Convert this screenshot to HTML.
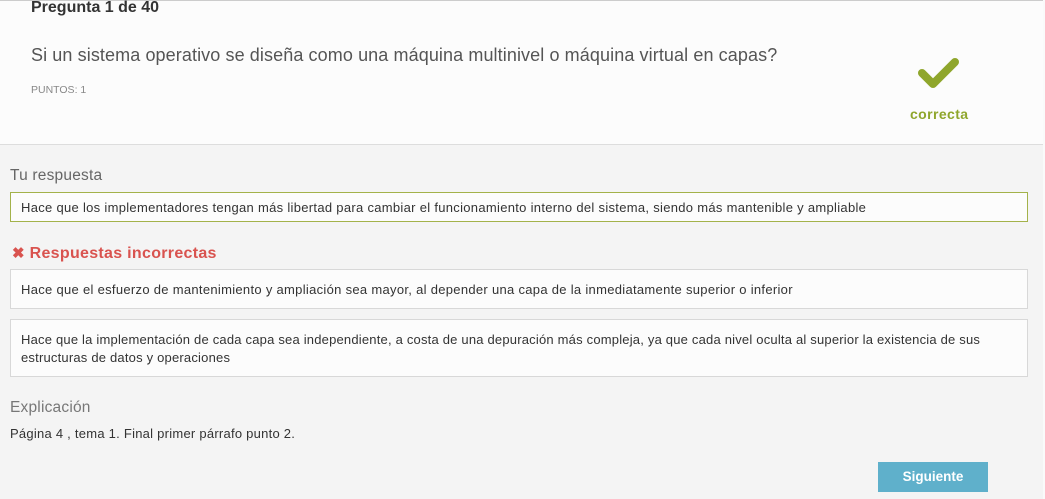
<!DOCTYPE html>
<html><head><meta charset="utf-8"><style>
*{margin:0;padding:0;box-sizing:border-box}
body{width:1045px;height:499px;overflow:hidden;background:#f4f4f4;font-family:"Liberation Sans",sans-serif;color:#333;position:relative}
.top{position:absolute;left:0;top:0;width:1043px;height:145px;background:#fcfcfc;border-top:1px solid #ccc;border-bottom:1px solid #ddd}
.edge{position:absolute;left:1043px;top:0;width:2px;height:499px;background:#fafafa}
.abs{position:absolute;white-space:nowrap}
.box{position:absolute;left:10px;width:1018px;background:#fcfcfc;border:1px solid #d8d8d8;font-size:13px;color:#333;padding:0 10px;letter-spacing:.3px}
</style></head><body>
<div class="top"></div><div class="edge"></div>
<div class="abs" style="left:31px;top:-1px;font-size:16px;font-weight:bold;color:#333">Pregunta 1 de 40</div>
<div class="abs" style="left:31px;top:45px;font-size:18px;color:#555;letter-spacing:.1px">Si un sistema operativo se diseña como una máquina multinivel o máquina virtual en capas?</div>
<div class="abs" style="left:31px;top:84px;font-size:10.5px;color:#888">PUNTOS: 1</div>
<svg class="abs" style="left:917px;top:56px" width="44" height="36" viewBox="0 0 44 36"><path d="M5 17 L16 28 L38 6" stroke="#8fa62c" stroke-width="8" fill="none" stroke-linecap="round" stroke-linejoin="round"/></svg>
<div class="abs" style="left:910px;top:106px;font-size:14px;font-weight:bold;color:#8fa62c;letter-spacing:.4px">correcta</div>
<div class="abs" style="left:10px;top:167px;font-size:15.5px;color:#666;letter-spacing:.2px">Tu respuesta</div>
<div class="box" style="top:192px;height:30px;border-color:#a3b24a;line-height:29px">Hace que los implementadores tengan más libertad para cambiar el funcionamiento interno del sistema, siendo más mantenible y ampliable</div>
<div class="abs" style="left:12px;top:244px;font-size:16px;font-weight:bold;color:#d9534f;letter-spacing:.3px"><span style="font-size:15px">✖</span> Respuestas incorrectas</div>
<div class="box" style="top:269px;height:40px;line-height:39px">Hace que el esfuerzo de mantenimiento y ampliación sea mayor, al depender una capa de la inmediatamente superior o inferior</div>
<div class="box" style="top:319px;height:58px;line-height:18px;padding-top:11px;letter-spacing:.2px">Hace que la implementación de cada capa sea independiente, a costa de una depuración más compleja, ya que cada nivel oculta al superior la existencia de sus<br>estructuras de datos y operaciones</div>
<div class="abs" style="left:10px;top:399px;font-size:15.5px;color:#777;letter-spacing:.2px">Explicación</div>
<div class="abs" style="left:10px;top:426px;font-size:13px;color:#333;letter-spacing:.25px">Página 4 , tema 1. Final primer párrafo punto 2.</div>
<div class="abs" style="left:878px;top:462px;width:110px;height:30px;background:#5fb0cb;color:#fff;font-weight:bold;font-size:13.5px;text-align:center;line-height:30px">Siguiente</div>
</body></html>
